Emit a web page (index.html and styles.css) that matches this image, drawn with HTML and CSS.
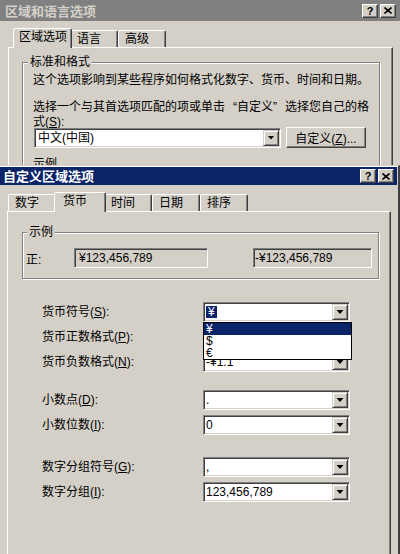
FILE: index.html
```html
<!DOCTYPE html>
<html lang="zh-CN">
<head>
  <meta charset="UTF-8" />
  <meta name="viewport" content="width=device-width, initial-scale=1.0"/>
  <title>自定义区域选项</title>
  <link rel="stylesheet" href="styles.css">
</head>
<body>
  <!-- Fenêtre du fond (inactive) -->
  <div class="window back">
    <div class="titlebar">
      <span class="title">区域和语言选项</span>
      <div class="tbtns">
        <span class="tbtn">?</span>
        <span class="tbtn"><svg width="8" height="7" viewBox="0 0 8 7"><path d="M0.5 0.5L7.5 6.5M7.5 0.5L0.5 6.5" stroke="#000" stroke-width="1.6"/></svg></span>
      </div>
    </div>
    <div class="win-body">
      <div class="tabs">
        <span class="tab long on">区域选项</span>
        <span class="tab">语言</span>
        <span class="tab">高级</span>
      </div>
      <div class="panel">
        <fieldset class="group std">
          <legend>标准和格式</legend>
          <p class="note">这个选项影响到某些程序如何格式化数字、货币、时间和日期。</p>
          <p class="note pick">选择一个与其首选项匹配的项或单击<span class="q open">“</span>自定义<span class="q close">”</span>选择您自己的格<br>式(<u>S</u>):</p>
          <div class="pick-row">
            <div class="combo locale"><span class="val">中文(中国)</span><span class="drop"></span></div>
            <button class="btn">自定义(<u>Z</u>)...</button>
          </div>
          <p class="note sample-title">示例</p>
        </fieldset>
      </div>
    </div>
  </div>

  <!-- Fenêtre active -->
  <div class="window front">
    <div class="titlebar active">
      <span class="title">自定义区域选项</span>
      <div class="tbtns">
        <span class="tbtn">?</span>
        <span class="tbtn"><svg width="8" height="7" viewBox="0 0 8 7"><path d="M0.5 0.5L7.5 6.5M7.5 0.5L0.5 6.5" stroke="#000" stroke-width="1.6"/></svg></span>
      </div>
    </div>
    <div class="win-body">
      <div class="tabs">
        <span class="tab">数字</span>
        <span class="tab on">货币</span>
        <span class="tab">时间</span>
        <span class="tab">日期</span>
        <span class="tab">排序</span>
      </div>
      <div class="panel">
        <fieldset class="group example">
          <legend>示例</legend>
          <div class="sample-row">
            <span class="sample-label">正:</span>
            <span class="sample pos">¥123,456,789</span>
            <span class="sample neg">-¥123,456,789</span>
          </div>
        </fieldset>

        <div class="fields">
          <div class="field">
            <label>货币符号(<u>S</u>):</label>
            <div class="combo">
              <span class="val"><span class="hl">¥</span></span><span class="drop"></span>
              <ul class="list">
                <li class="hl">¥</li>
                <li>$</li>
                <li>€</li>
              </ul>
            </div>
          </div>
          <div class="field">
            <label>货币正数格式(<u>P</u>):</label>
            <div class="combo"><span class="val">¥1.1</span><span class="drop"></span></div>
          </div>
          <div class="field">
            <label>货币负数格式(<u>N</u>):</label>
            <div class="combo"><span class="val">-¥1.1</span><span class="drop"></span></div>
          </div>

          <div class="field sep">
            <label>小数点(<u>D</u>):</label>
            <div class="combo"><span class="val">.</span><span class="drop"></span></div>
          </div>
          <div class="field">
            <label>小数位数(<u>I</u>):</label>
            <div class="combo"><span class="val">0</span><span class="drop"></span></div>
          </div>

          <div class="field sep wide">
            <label>数字分组符号(<u>G</u>):</label>
            <div class="combo"><span class="val">,</span><span class="drop"></span></div>
          </div>
          <div class="field">
            <label>数字分组(<u>I</u>):</label>
            <div class="combo"><span class="val">123,456,789</span><span class="drop"></span></div>
          </div>
        </div>
      </div>
    </div>
  </div>
</body>
</html>
```

FILE: styles.css
```css
html, body {
  margin: 0;
  height: 554px;
  overflow: hidden;
}

body {
  background: #d4d0c8;
  color: #000;
  font-family: "Liberation Sans", "Noto Sans CJK SC", sans-serif;
  font-size: 12px;
}

/* windows */
.window {
  box-sizing: border-box;
  width: 400px;
}

.back {
  height: 165px;
  overflow: hidden;
}

.back .win-body {
  padding: 0 7px 0 8px;
}

.back .panel {
  height: 200px;
}

.front {
  border-top: 1px solid #d4d0c8;
  border-right: 2px solid #404040;
  padding: 1px 1px 0 0;
  box-shadow: inset 0 1px 0 #fff;
}

.front .win-body {
  padding: 0 6px 0 7px;
}

.front .panel {
  height: 400px;
}

/* title bars */
.titlebar {
  display: flex;
  align-items: center;
  justify-content: space-between;
  height: 21px;
  padding: 0 4px 0 5px;
  background: #808080;
  color: #d4d0c8;
}

.titlebar.active {
  height: 18px;
  padding: 0 3px;
  background: #0a246a;
  color: #fff;
}

.title {
  font-family: "Noto Sans CJK SC", sans-serif;
  font-size: 13px;
  font-weight: bold;
  line-height: 14px;
}

.tbtns {
  display: flex;
  gap: 2px;
}

.tbtn {
  display: flex;
  align-items: center;
  justify-content: center;
  box-sizing: border-box;
  width: 16px;
  height: 14px;
  background: #d4d0c8;
  border: 1px solid;
  border-color: #fff #404040 #404040 #fff;
  box-shadow: inset -1px -1px 0 #808080;
  color: #000;
  font: bold 11px "Liberation Sans", sans-serif;
}

/* tabs */
.tabs {
  display: flex;
  align-items: flex-end;
  height: 26px;
  position: relative;
  z-index: 1;
}

.back .tabs {
  padding-left: 7px;
}

.front .tabs {
  padding-left: 1px;
}

.tab {
  box-sizing: border-box;
  height: 17px;
  line-height: 16px;
  padding: 0 16px 0 6px;
  background: #d4d0c8;
  border: 1px solid;
  border-bottom: none;
  border-color: #fff #404040 transparent #fff;
  box-shadow: inset -1px 0 0 #808080;
  border-radius: 2px 2px 0 0;
  white-space: nowrap;
}

.tab.on {
  height: 20px;
  margin: 0 -2px -1px;
  padding: 0 18px 0 8px;
  position: relative;
  z-index: 1;
}

.tab.long {
  padding: 0 2px 0 3px;
}

.tab.long.on {
  padding: 0 4px 0 5px;
}

.panel {
  box-sizing: border-box;
  border: 1px solid;
  border-color: #fff #404040 #404040 #fff;
  box-shadow: inset -1px -1px 0 #808080;
}

/* group boxes */
.group {
  margin: 0;
  padding: 0;
  min-width: 0;
  border: 1px solid #808080;
  box-shadow: inset 1px 1px 0 #fff, 1px 1px 0 #fff;
}

.group legend {
  margin-left: 5px;
  padding: 0 2px;
  line-height: 15px;
  background: #d4d0c8;
}

.std {
  margin: 7px 12px 0 13px;
}

.note {
  margin: 2px 0 0 10px;
  line-height: 16px;
}

.note.pick {
  margin-top: 12px;
  line-height: 15px;
}

.q {
  display: inline-block;
  width: 12px;
}

.q.open {
  text-align: right;
}

.pick-row {
  display: flex;
  align-items: center;
  gap: 5px;
  height: 21px;
  margin: -3px 0 0 11px;
}

.note.sample-title {
  margin-top: 8px;
}

.example {
  margin: 13px 11px 0 14px;
}

.example legend {
  margin-left: 4px;
}

.sample-row {
  display: flex;
  align-items: center;
  margin: 8px 0 10px;
  padding-left: 3px;
}

.sample-label {
  width: 48px;
}

.sample {
  box-sizing: border-box;
  height: 20px;
  line-height: 18px;
  border: 1px solid;
  border-color: #808080 #fff #fff #808080;
  box-shadow: inset 1px 1px 0 #404040;
  white-space: nowrap;
}

.sample.pos {
  width: 134px;
  padding-left: 4px;
}

.sample.neg {
  width: 119px;
  margin-left: 45px;
  padding-left: 1px;
}

/* combo boxes */
.combo {
  position: relative;
  display: flex;
  align-items: center;
  box-sizing: border-box;
  width: 147px;
  height: 20px;
  padding: 1px 1px 1px 2px;
  background: #fff;
  border: 1px solid;
  border-color: #808080 #fff #fff #808080;
  box-shadow: inset 1px 1px 0 #404040, inset -1px -1px 0 #d4d0c8;
}

.combo.locale {
  width: 247px;
  padding-left: 3px;
}

.combo .val {
  flex: 1;
  line-height: 16px;
  white-space: nowrap;
  overflow: hidden;
}

.drop {
  display: flex;
  align-items: center;
  justify-content: center;
  box-sizing: border-box;
  width: 16px;
  height: 16px;
  background: #d4d0c8;
  border: 1px solid;
  border-color: #d4d0c8 #404040 #404040 #d4d0c8;
  box-shadow: inset 1px 1px 0 #fff, inset -1px -1px 0 #808080;
}

.drop::after {
  content: "";
  width: 7px;
  height: 4px;
  background: #000;
  clip-path: polygon(0 0, 100% 0, 50% 100%);
}

.hl {
  background: #0a246a;
  color: #fff;
}

.val .hl {
  padding: 0 2px;
  line-height: 12px;
  display: inline-block;
}

.list {
  position: absolute;
  top: 19px;
  left: -1px;
  z-index: 5;
  width: 149px;
  margin: 0;
  padding: 0;
  list-style: none;
  box-sizing: border-box;
  background: #fff;
  border: 1px solid #000;
}

.list li {
  height: 12px;
  line-height: 12px;
  padding-left: 2px;
}

.btn {
  box-sizing: border-box;
  width: 80px;
  height: 21px;
  padding: 0;
  background: #d4d0c8;
  border: 1px solid;
  border-color: #fff #404040 #404040 #fff;
  box-shadow: inset -1px -1px 0 #808080;
  font: inherit;
  color: #000;
}

/* fields */
.fields {
  margin-top: 23px;
  padding-left: 34px;
}

.field {
  display: flex;
  align-items: center;
  height: 20px;
  margin-top: 5px;
}

.field:first-child {
  margin-top: 0;
}

.field.sep {
  margin-top: 18px;
}

.field.sep.wide {
  margin-top: 22px;
}

.field label {
  width: 161px;
  line-height: 20px;
}
```
